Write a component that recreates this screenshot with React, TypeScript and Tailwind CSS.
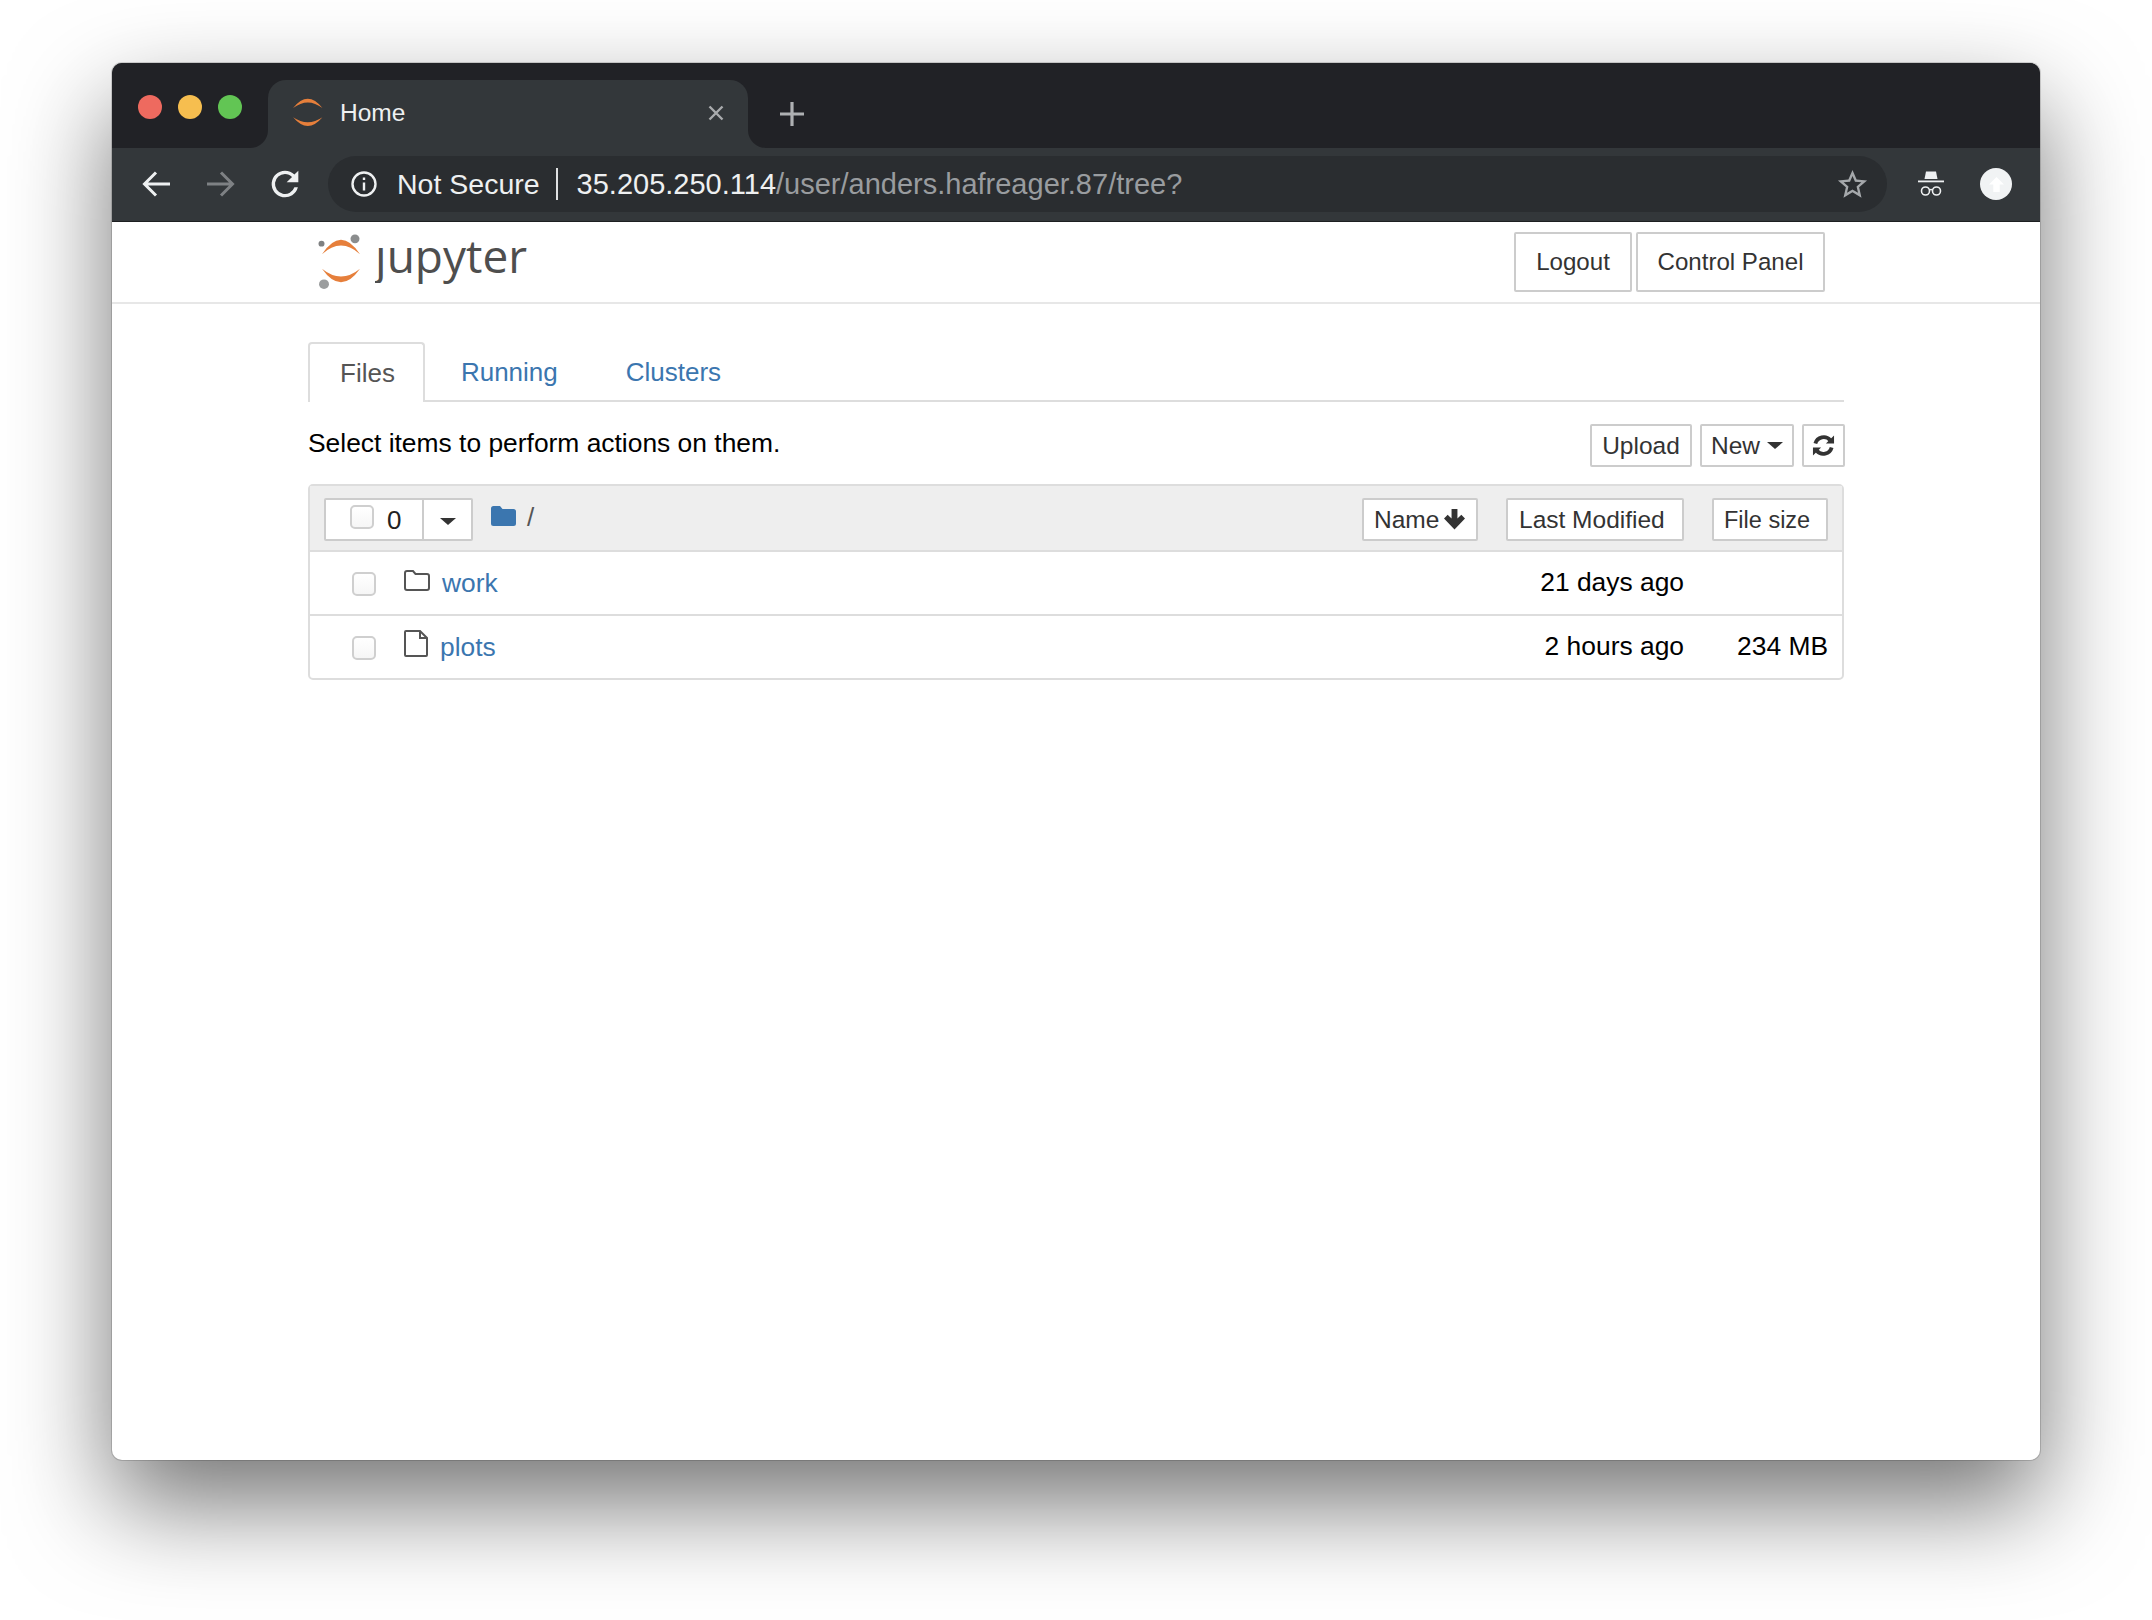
import React from 'react';

const sans = 'font-["Liberation_Sans",Arial,sans-serif]';

function JupyterMark({ className, dots }: { className: string; dots?: boolean }) {
  return (
    <svg viewBox="0 0 44 58" preserveAspectRatio="none" className={className}>
      <path d="M4 21 Q23 -9 42 21 Q23 3 4 21 Z" fill="#e67f3b" />
      <path d="M4 36 Q23 64 42 36 Q23 52 4 36 Z" fill="#e67f3b" />
      {dots && (
        <>
          <circle cx="37" cy="5" r="4.5" fill="#8b8d8e" />
          <circle cx="3.5" cy="10" r="3" fill="#7f8182" />
          <circle cx="6" cy="52" r="5" fill="#9b9d9e" />
        </>
      )}
    </svg>
  );
}

function ArrowIcon({ flip, color }: { flip?: boolean; color: string }) {
  return (
    <svg viewBox="0 0 28 26" className={`w-[28px] h-[26px] ${flip ? 'rotate-180' : ''}`} fill="none" stroke={color} strokeWidth="3">
      <path d="M28 13 H3 M14 1.5 L2.5 13 L14 24.5" />
    </svg>
  );
}

function OutlineButton({ className, children }: { className: string; children: React.ReactNode }) {
  return (
    <div className={`flex items-center border-2 border-[#ccc] bg-white text-[#333] rounded-[2px] ${className}`}>
      {children}
    </div>
  );
}

function Checkbox({ className = '' }: { className?: string }) {
  return <div className={`w-[24px] h-[24px] shrink-0 rounded-[5px] border-2 border-[#cfcfcf] bg-gradient-to-b from-white to-[#f6f6f6] ${className}`} />;
}

function Caret({ className = '' }: { className?: string }) {
  return <div className={`w-0 h-0 border-x-[8px] border-x-transparent border-t-[7px] border-t-[#333] ${className}`} />;
}

function TabBar() {
  return (
    <div className="flex h-[85px] bg-[#33373a]">
      <div className="w-[156px] bg-[#212226] rounded-br-[18px] flex items-start pt-[32px] pl-[26px] gap-[16px]">
        <div className="w-[24px] h-[24px] rounded-full bg-[#ee6a5f]" />
        <div className="w-[24px] h-[24px] rounded-full bg-[#f6be4f]" />
        <div className="w-[24px] h-[24px] rounded-full bg-[#62c554]" />
      </div>
      <div className="bg-[#212226] w-[480px]">
        <div className="mt-[17px] h-[68px] bg-[#33373a] rounded-t-[18px] flex items-center pl-[22px] pr-[24px] pb-[3px]">
          <JupyterMark className="w-[34px] h-[36px]" />
          <span className="ml-[16px] mt-[1px] text-[24.5px] text-[#eef0f1]">Home</span>
          <svg viewBox="0 0 16 16" className="ml-auto w-[16px] h-[16px]" stroke="#a9abad" strokeWidth="2.4">
            <path d="M1.5 1.5 L14.5 14.5 M14.5 1.5 L1.5 14.5" />
          </svg>
        </div>
      </div>
      <div className="flex-1 bg-[#212226] rounded-bl-[18px] flex items-center pl-[32px] pt-[17px]">
        <svg viewBox="0 0 24 24" className="w-[24px] h-[24px]" stroke="#aeb0b2" strokeWidth="3.2">
          <path d="M12 0 V24 M0 12 H24" />
        </svg>
      </div>
    </div>
  );
}

function AddressRow() {
  return (
    <div className="flex items-start h-[74px] bg-[#33373a] pt-[8px] border-b border-[#1d1f21]">
      <div className="w-[216px] h-[56px] flex items-center pl-[30px]">
        <ArrowIcon color="#eef0f1" />
        <div className="ml-[37px]">
          <ArrowIcon flip color="#7e8184" />
        </div>
        <svg viewBox="0 0 24 24" className="ml-[30px] -mt-[1px] w-[40px] h-[40px]" fill="#eef0f1">
          <path d="M17.65 6.35A7.96 7.96 0 0 0 12 4a8 8 0 1 0 7.73 10h-2.08A6 6 0 1 1 12 6c1.66 0 3.14.69 4.22 1.78L13 11h7V4z" />
        </svg>
      </div>
      <div className="w-[1559px] h-[56px] bg-[#2a2d30] rounded-full flex items-center pl-[23px] pr-[17px]">
        <svg viewBox="0 0 26 26" className="w-[26px] h-[26px]" fill="none" stroke="#eef0f1" strokeWidth="2.4">
          <circle cx="13" cy="13" r="11.5" />
          <path d="M13 11.5 V19.5 M13 6.5 V9" />
        </svg>
        <span className="ml-[20px] text-[28.5px] text-[#eef0f1]">Not Secure</span>
        <div className="ml-[16px] w-[2px] h-[32px] bg-[#dfe1e2]" />
        <span className="ml-[19px] mt-[1px] text-[29px] text-[#eef0f1]">
          35.205.250.114<span className="text-[#999c9f]">/user/anders.hafreager.87/tree?</span>
        </span>
        <svg viewBox="0 0 24 24" className="ml-auto w-[35px] h-[35px]" fill="#a5a8ab">
          <path d="M22 9.24l-7.19-.62L12 2 9.19 8.63 2 9.24l5.46 4.73L5.82 21 12 17.27 18.18 21l-1.63-7.03L22 9.24zM12 15.4l-3.76 2.27 1-4.28-3.32-2.88 4.38-.38L12 6.1l1.71 4.04 4.38.38-3.32 2.88 1 4.28L12 15.4z" />
        </svg>
      </div>
      <div className="flex-1 h-[56px] flex items-center pl-[30px]">
        <svg viewBox="0 0 28 26" className="w-[28px] h-[26px]" fill="none" stroke="#eef0f1">
          <path d="M9 0.5 L19 0.5 L20.5 8 L7.5 8 Z" fill="#eef0f1" stroke="none" />
          <rect x="1" y="9.5" width="26" height="1.8" fill="#eef0f1" stroke="none" />
          <circle cx="8.5" cy="20" r="4" strokeWidth="1.6" />
          <circle cx="19.5" cy="20" r="4" strokeWidth="1.6" />
          <path d="M12.5 19 Q14 18 15.5 19" strokeWidth="1.4" />
        </svg>
        <div className="ml-[35px] w-[32px] h-[32px] rounded-full bg-[#f1f3f4] flex items-center justify-center">
          <svg viewBox="0 0 14 14" className="w-[15px] h-[15px]" fill="#ffffff">
            <path d="M7 0 L14 7 H10 V14 H4 V7 H0 Z" />
          </svg>
        </div>
      </div>
    </div>
  );
}

function Header() {
  return (
    <div className="h-[82px] border-b-2 border-[#e7e7e7] pl-[206px] pr-[215px] flex items-start justify-between">
      <div className="flex items-start pt-[12px]">
        <JupyterMark dots className="w-[44px] h-[56px]" />
        <span className='-mt-[7px] ml-[13px] text-[46px] leading-[56px] text-[#4e4e4e] font-["Open_Sans",sans-serif]'>
          <span className="inline-block [clip-path:inset(0.42em_0_0_0)]">j</span>upyter
        </span>
      </div>
      <div className="flex gap-[4px] pt-[10px] text-[24.1px]">
        <OutlineButton className="w-[118px] h-[60px] justify-center">Logout</OutlineButton>
        <OutlineButton className="w-[189px] h-[60px] justify-center">Control Panel</OutlineButton>
      </div>
    </div>
  );
}

function FileRow({ icon, name, gap, modified, size, last }: { icon: React.ReactNode; name: string; gap: string; modified: string; size?: string; last?: boolean }) {
  return (
    <div className={`flex items-center pl-[42px] pr-[14px] ${last ? 'h-[62px]' : 'h-[64px] border-b-2 border-[#ddd]'}`}>
      <Checkbox className="mt-[2px]" />
      <div className="ml-[28px] w-[28px] -mt-[5px]">{icon}</div>
      <a className={`text-[#3b76af] ${gap}`}>{name}</a>
      <span className="ml-auto -mt-[2px] text-black">{modified}</span>
      <span className="w-[144px] -mt-[2px] text-right text-black">{size}</span>
    </div>
  );
}

function FileBrowser() {
  return (
    <div className="px-[196px] text-[26.4px] leading-[36px]">
      <div className="mt-[38px] flex gap-[4px] h-[60px] border-b-2 border-[#ddd] text-[26px]">
        <div className="h-[60px] pl-[30px] pr-[28px] flex items-center bg-white border-2 border-b-0 border-[#ddd] rounded-t-[4px] text-[#555]">Files</div>
        <a className="h-[58px] pt-[2px] px-[32px] flex items-center text-[#3b76af]">Running</a>
        <a className="h-[58px] pt-[2px] px-[32px] flex items-center text-[#3b76af]">Clusters</a>
      </div>

      <div className="mt-[22px] -mr-[1px] flex items-center justify-between text-black">
        <span className="pb-[6px]">Select items to perform actions on them.</span>
        <div className="flex gap-[8px] text-[24.5px]">
          <OutlineButton className="w-[102px] h-[43px] justify-center">Upload</OutlineButton>
          <OutlineButton className="w-[94px] h-[43px] justify-center gap-[7px]">New<Caret /></OutlineButton>
          <OutlineButton className="w-[43px] h-[43px] justify-center">
            <svg viewBox="0 0 24 24" className="w-[23px] h-[23px]" fill="none" stroke="#333" strokeWidth="4">
              <path d="M3.5 10 A9 9 0 0 1 19 6.5" />
              <path d="M20.5 14 A9 9 0 0 1 5 17.5" />
              <path d="M23 1.5 V10 H14.5 Z M1 22.5 V14 H9.5 Z" fill="#333" stroke="none" />
            </svg>
          </OutlineButton>
        </div>
      </div>

      <div className="mt-[17px] border-2 border-[#ddd] rounded-[5px]">
        <div className="h-[66px] bg-[#eeeeee] border-b-2 border-[#ddd] flex items-center pl-[14px] pr-[14px] pt-[3px] text-[24.5px]">
          <div className="flex w-[149px] h-[43px] border-2 border-[#ccc] bg-white rounded-[2px]">
            <div className="w-[98px] flex items-center pl-[24px] border-r-2 border-[#ccc] text-black">
              <Checkbox className="-mt-[6px]" />
              <span className="ml-[13px] text-[26px] text-[#222]">0</span>
            </div>
            <div className="flex-1 flex items-center justify-center pt-[3px]"><Caret /></div>
          </div>
          <svg viewBox="0 0 25 20" className="ml-[18px] -mt-[8px] w-[25px] h-[20px]" fill="#3b76af">
            <path d="M2.5 0 H9 L11.5 3 H22.5 A2.5 2.5 0 0 1 25 5.5 V17.5 A2.5 2.5 0 0 1 22.5 20 H2.5 A2.5 2.5 0 0 1 0 17.5 V2.5 A2.5 2.5 0 0 1 2.5 0 Z" />
          </svg>
          <span className="ml-[11px] -mt-[6px] text-[26px] font-medium text-[#555]">/</span>
          <OutlineButton className="ml-auto w-[116px] h-[43px] pl-[10px] gap-[5px]">
            Name
            <svg viewBox="0 0 20 20" className="w-[21px] h-[21px]" fill="#333">
              <path d="M7.2 0 H12.8 V9 L16.5 5.4 L20 9 L10 19.5 L0 9 L3.5 5.4 L7.2 9 Z" />
            </svg>
          </OutlineButton>
          <OutlineButton className="ml-[28px] w-[178px] h-[43px] pl-[11px]">Last Modified</OutlineButton>
          <OutlineButton className="ml-[28px] w-[116px] h-[43px] pl-[10px] text-[23.5px]">File size</OutlineButton>
        </div>

        <FileRow
          name="work"
          gap="ml-[10px]"
          modified="21 days ago"
          icon={
            <svg viewBox="0 0 26 21" className="w-[26px] h-[21px]" fill="none" stroke="#555" strokeWidth="2">
              <path d="M3 1 H9 L11.5 4 H23 A2 2 0 0 1 25 6 V18 A2 2 0 0 1 23 20 H3 A2 2 0 0 1 1 18 V3 A2 2 0 0 1 3 1 Z" />
            </svg>
          }
        />
        <FileRow
          last
          name="plots"
          gap="ml-[8px]"
          modified="2 hours ago"
          size="234 MB"
          icon={
            <svg viewBox="0 0 24 27" className="w-[24px] h-[27px] -mt-[2px]" fill="none" stroke="#555" strokeWidth="2">
              <path d="M2 1 H16 L23 8 V25 A1 1 0 0 1 22 26 H2 A1 1 0 0 1 1 25 V2 A1 1 0 0 1 2 1 Z M16 1 V8 H23" />
            </svg>
          }
        />
      </div>
    </div>
  );
}

export default function App() {
  return (
    <div className={`${sans} min-h-[1620px] bg-white pl-[112px] pt-[63px]`}>
      <div className="w-[1928px] h-[1397px] bg-white rounded-[10px] overflow-hidden shadow-[0_44px_100px_rgba(0,0,0,0.55),0_0_0_1px_rgba(0,0,0,0.15)]">
        <TabBar />
        <AddressRow />
        <Header />
        <FileBrowser />
      </div>
    </div>
  );
}
